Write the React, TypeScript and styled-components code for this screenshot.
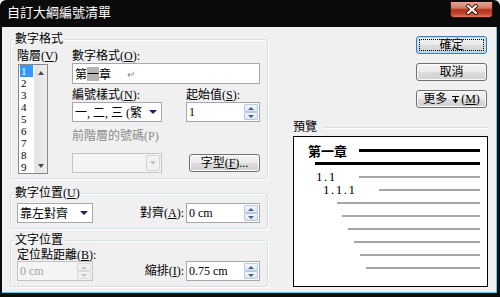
import React from 'react';
import styled, { createGlobalStyle } from 'styled-components';

const GlobalStyle = createGlobalStyle`
  html, body {
    margin: 0;
    padding: 0;
    background: #ffffff;
  }
  body {
    font-family: "Liberation Serif", "Noto Sans CJK TC", serif;
    font-size: 12px;
    color: #000;
  }
`;

const Window = styled.div`
  width: 500px;
  height: 297px;
  box-sizing: border-box;
  background: #0b0b0b;
  border-radius: 6px 6px 0 0;
  padding: 0 3px 4px 2px;
  display: flex;
  flex-direction: column;
  overflow: hidden;
`;

const TitleBar = styled.div`
  height: 27px;
  flex: none;
  display: flex;
  align-items: flex-start;
  padding-left: 5px;
`;

const Title = styled.div`
  margin-top: 4px;
  color: #ffffff;
  font-family: "Noto Sans CJK TC", sans-serif;
  font-size: 13px;
  line-height: 16px;
`;

const CloseButton = styled.div`
  margin: 2px 4px 0 auto;
  width: 43px;
  height: 16px;
  box-sizing: border-box;
  border: 1px solid #3d130a;
  border-top: none;
  border-radius: 0 0 4px 4px;
  background: linear-gradient(#e6a594 0%, #d27a64 40%, #b7321b 52%, #c2452b 78%, #e0805f 100%);
  display: flex;
  align-items: center;
  justify-content: center;
`;

const Client = styled.div`
  flex: 1;
  display: flex;
  gap: 25px;
  padding: 6px 8px 5px 8px;
  background: #f0f0f0;
  border-right: 1px solid #5cc7ee;
  border-bottom: 1px solid #5cc7ee;
  min-height: 0;
`;

const LeftColumn = styled.div`
  width: 258px;
  flex: none;
  display: flex;
  flex-direction: column;
`;

const RightColumn = styled.div`
  flex: 1;
  display: flex;
  flex-direction: column;
`;

const Group = styled.fieldset<{ $top?: number }>`
  margin: ${p => p.$top ?? 0}px 0 0 0;
  padding: 3px 7px ${p => (p.$top ? 5 : 4)}px 5px;
  border: 1px solid #d5dfe5;
  border-radius: 3px;
  min-width: 0;
  box-shadow: inset 1px 1px 0 #ffffff, 1px 1px 0 #ffffff;
`;

const Legend = styled.legend`
  padding: 0 1px;
  margin-left: -2px;
  font-size: 12px;
  line-height: 13px;
`;

const Label = styled.div<{ $disabled?: boolean; $h?: number; $w?: number }>`
  font-size: 12px;
  line-height: ${p => p.$h ?? 14}px;
  white-space: nowrap;
  ${p => (p.$w ? `width: ${p.$w}px;` : '')}
  color: ${p => (p.$disabled ? '#8c8c8c' : '#000')};
  u {
    text-underline-offset: 1px;
  }
`;

/* ---------- level list ---------- */

const FormatRow = styled.div`
  display: flex;
  gap: 24px;
  padding-left: 1px;
`;

const LevelColumn = styled.div`
  width: 31px;
  flex: none;
`;

const ListBox = styled.div`
  margin: 1px 0 0 1px;
  height: 110px;
  box-sizing: border-box;
  border: 1px solid #828790;
  background: #ffffff;
  display: flex;
  overflow: hidden;
`;

const ListItems = styled.div`
  width: 15px;
  flex: none;
`;

const ListItem = styled.div<{ $selected?: boolean }>`
  margin-left: 1px;
  width: 13px;
  height: 12px;
  padding-left: 1px;
  box-sizing: border-box;
  font-size: 11px;
  line-height: 12px;
  background: ${p => (p.$selected ? '#3399ff' : 'transparent')};
  color: ${p => (p.$selected ? '#ffffff' : '#000')};
`;

const ScrollTrack = styled.div`
  flex: 1;
  background: linear-gradient(90deg, #e3e3e3, #ededed);
  border-left: 1px solid #e8e8e8;
  display: flex;
  flex-direction: column;
  justify-content: space-between;
  align-items: center;
  padding: 6px 0 5px;
`;

const Arrow = styled.span<{ $dir: 'up' | 'down'; $color: string; $w: number }>`
  width: 0;
  height: 0;
  border-left: ${p => p.$w / 2}px solid transparent;
  border-right: ${p => p.$w / 2}px solid transparent;
  ${p =>
    p.$dir === 'up'
      ? `border-bottom: ${Math.ceil(p.$w / 2)}px solid ${p.$color};`
      : `border-top: ${Math.ceil(p.$w / 2)}px solid ${p.$color};`}
`;

/* ---------- inputs ---------- */

const FieldColumn = styled.div`
  width: 188px;
  flex: none;
  display: flex;
  flex-direction: column;
`;

const TextField = styled.div`
  height: 21px;
  box-sizing: border-box;
  border: 1px solid #a4a9b0;
  background: #ffffff;
  padding: 0 2px;
  display: flex;
  align-items: center;
  font-family: "Noto Sans CJK TC", sans-serif;
  font-size: 12px;
`;

const Shaded = styled.span`
  background: #b4b4b4;
  line-height: 14px;
`;

const ParaMark = styled.span`
  margin-left: 16px;
  color: #8a8a8a;
  font-size: 10px;
`;

const ControlRow = styled.div<{ $top?: number; $bottom?: boolean }>`
  margin-top: ${p => p.$top ?? 0}px;
  display: flex;
  justify-content: space-between;
  align-items: ${p => (p.$bottom ? 'flex-end' : 'center')};
`;

const Combo = styled.div<{ $w: number; $disabled?: boolean; $left?: number }>`
  width: ${p => p.$w}px;
  height: 20px;
  margin-left: ${p => p.$left ?? 0}px;
  box-sizing: border-box;
  border: 1px solid ${p => (p.$disabled ? '#c3c3c3' : '#a4a9b0')};
  background: ${p => (p.$disabled ? '#f4f4f4' : '#ffffff')};
  display: flex;
  align-items: center;
  padding-left: 2px;
`;

const ComboText = styled.span`
  flex: 1;
  overflow: hidden;
  white-space: nowrap;
  font-size: 12px;
`;

const ComboArrow = styled.span`
  width: 14px;
  display: flex;
  justify-content: center;
  margin-right: 1px;
`;

const DisabledDrop = styled.span`
  width: 14px;
  height: 16px;
  margin-right: 1px;
  box-sizing: border-box;
  border: 1px solid #d4d4d4;
  border-radius: 2px;
  background: #f2f2f2;
  display: flex;
  align-items: center;
  justify-content: center;
`;

const Spin = styled.div<{ $w: number; $disabled?: boolean }>`
  width: ${p => p.$w}px;
  height: 20px;
  box-sizing: border-box;
  border: 1px solid ${p => (p.$disabled ? '#c3c3c3' : '#a4a9b0')};
  background: ${p => (p.$disabled ? '#f4f4f4' : '#ffffff')};
  display: flex;
  align-items: center;
  color: ${p => (p.$disabled ? '#a3a3a3' : '#000')};
`;

const SpinValue = styled.span`
  flex: 1;
  padding-left: 2px;
  font-size: 12px;
  white-space: nowrap;
`;

const SpinButtons = styled.div`
  width: 14px;
  height: 16px;
  margin-right: 1px;
  display: flex;
  flex-direction: column;
`;

const SpinHalf = styled.div<{ $disabled?: boolean }>`
  flex: 1;
  box-sizing: border-box;
  border: 1px solid ${p => (p.$disabled ? '#d9d9d9' : '#b9c9dc')};
  border-radius: 1px;
  background: ${p =>
    p.$disabled ? '#f0f0f0' : 'linear-gradient(#f3f7fc, #dbe5f1)'};
  display: flex;
  align-items: center;
  justify-content: center;
`;

const LabeledField = styled.div`
  display: flex;
  align-items: center;
  gap: 2px;
`;

const StackedField = styled.div`
  margin-left: 1px;
`;

/* ---------- buttons ---------- */

const PushButton = styled.div<{ $w?: number; $default?: boolean }>`
  width: ${p => p.$w ?? 71}px;
  height: 18px;
  box-sizing: border-box;
  border: 1px solid ${p => (p.$default ? '#3c7fb1' : '#707070')};
  border-radius: 3px;
  background: linear-gradient(#f2f2f2 0%, #ebebeb 48%, #dddddd 52%, #cfcfcf 100%);
  box-shadow: ${p => (p.$default ? 'inset 0 0 0 1px #a6e0f7' : 'inset 0 0 0 1px #fbfbfb')};
  display: flex;
  align-items: center;
  justify-content: center;
  font-size: 12px;
  line-height: 14px;
  white-space: nowrap;
  outline: ${p => (p.$default ? '1px dotted #000' : 'none')};
  outline-offset: -4px;
  u {
    text-underline-offset: 1px;
  }
  svg {
    margin: 0 2px 0 5px;
  }
`;

const ButtonStack = styled.div`
  margin: 3px 1px 0 0;
  align-self: flex-end;
  display: flex;
  flex-direction: column;
  gap: 9px;
`;

/* ---------- preview ---------- */

const PreviewHeader = styled.div`
  margin-top: 13px;
  display: flex;
  align-items: center;
  gap: 6px;
  font-size: 12px;
  line-height: 13px;
`;

const HeaderRule = styled.div`
  flex: 1;
  height: 1px;
  background: #d5dfe5;
  box-shadow: 0 1px 0 #ffffff;
`;

const PreviewBox = styled.div`
  margin-top: 2px;
  flex: 1;
  border: 1px solid #000;
  background: #ffffff;
  padding: 7px 7px 0 0;
  display: flex;
  flex-direction: column;
`;

const PreviewRow = styled.div<{ $indent: number }>`
  height: 13px;
  display: flex;
  align-items: center;
  padding-left: ${p => p.$indent}px;
`;

const PreviewText = styled.span<{ $w: number; $strong?: boolean }>`
  width: ${p => p.$w}px;
  flex: none;
  white-space: nowrap;
  font-family: ${p =>
    p.$strong ? '"Noto Sans CJK TC", sans-serif' : '"Liberation Serif", serif'};
  font-weight: ${p => (p.$strong ? 700 : 400)};
  font-size: 13px;
  line-height: 13px;
  letter-spacing: ${p => (p.$strong ? 0 : 1.5)}px;
`;

const PreviewLine = styled.div<{ $strong?: boolean }>`
  flex: 1;
  height: ${p => (p.$strong ? 3 : 2)}px;
  background: ${p => (p.$strong ? '#000000' : '#a6a6a6')};
`;

const previewRows = [
  { text: '第一章', indent: 14, line: 65, strong: true },
  { text: '', indent: 21, line: 21, strong: true },
  { text: '1.1', indent: 22, line: 65 },
  { text: '1.1.1', indent: 29, line: 85 },
  { text: '', indent: 43, line: 43 },
  { text: '', indent: 48, line: 48 },
  { text: '', indent: 54, line: 54 },
  { text: '', indent: 60, line: 60 },
  { text: '', indent: 66, line: 66 },
  { text: '', indent: 72, line: 72 },
];

const levels = ['1', '2', '3', '4', '5', '6', '7', '8', '9'];

const SpinControl = ({ value, w, disabled }: { value: string; w: number; disabled?: boolean }) => (
  <Spin $w={w} $disabled={disabled}>
    <SpinValue>{value}</SpinValue>
    <SpinButtons>
      <SpinHalf $disabled={disabled}>
        <Arrow $dir="up" $w={6} $color={disabled ? '#c4c4c4' : '#4b5f85'} />
      </SpinHalf>
      <SpinHalf $disabled={disabled}>
        <Arrow $dir="down" $w={6} $color={disabled ? '#c4c4c4' : '#4b5f85'} />
      </SpinHalf>
    </SpinButtons>
  </Spin>
);

const MoreGlyph = () => (
  <svg width="7" height="9" viewBox="0 0 7 9">
    <path d="M0 1.5h7" stroke="#000" strokeWidth="1" />
    <path d="M3.5 2v6" stroke="#000" strokeWidth="1" />
    <path d="M0.5 4.5h6L3.5 8z" fill="#000" />
  </svg>
);

export default function App() {
  return (
    <>
      <GlobalStyle />
      <Window>
        <TitleBar>
          <Title>自訂大綱編號清單</Title>
          <CloseButton>
            <svg width="14" height="11" viewBox="0 0 14 11">
              <path d="M3 2l8 7M11 2l-8 7" stroke="#4a1c12" strokeWidth="4" strokeLinecap="round" />
              <path d="M3 2l8 7M11 2l-8 7" stroke="#ffffff" strokeWidth="2" strokeLinecap="round" />
            </svg>
          </CloseButton>
        </TitleBar>

        <Client>
          <LeftColumn>
            <Group>
              <Legend>數字格式</Legend>
              <FormatRow>
                <LevelColumn>
                  <Label>階層(<u>V</u>)</Label>
                  <ListBox>
                    <ListItems>
                      {levels.map(l => (
                        <ListItem key={l} $selected={l === '1'}>{l}</ListItem>
                      ))}
                    </ListItems>
                    <ScrollTrack>
                      <Arrow $dir="up" $w={7} $color="#4d4d4d" />
                      <Arrow $dir="down" $w={7} $color="#4d4d4d" />
                    </ScrollTrack>
                  </ListBox>
                </LevelColumn>

                <FieldColumn>
                  <Label>數字格式(<u>O</u>):</Label>
                  <TextField>
                    第<Shaded>一</Shaded>章<ParaMark>↵</ParaMark>
                  </TextField>
                  <ControlRow $top={4}>
                    <Label>編號樣式(<u>N</u>):</Label>
                    <Label $w={74}>起始值(<u>S</u>):</Label>
                  </ControlRow>
                  <ControlRow>
                    <Combo $w={90}>
                      <ComboText>一, 二, 三 (繁</ComboText>
                      <ComboArrow>
                        <Arrow $dir="down" $w={8} $color="#15246a" />
                      </ComboArrow>
                    </Combo>
                    <SpinControl value="1" w={74} />
                  </ControlRow>
                  <ControlRow $top={7}>
                    <Label $disabled>前階層的號碼(P)</Label>
                  </ControlRow>
                  <ControlRow $top={10}>
                    <Combo $w={90} $disabled>
                      <ComboText />
                      <DisabledDrop>
                        <Arrow $dir="down" $w={7} $color="#c3c3c3" />
                      </DisabledDrop>
                    </Combo>
                    <PushButton>
                      <span>字型(<u>F</u>)...</span>
                    </PushButton>
                  </ControlRow>
                </FieldColumn>
              </FormatRow>
            </Group>

            <Group $top={8}>
              <Legend>數字位置(<u>U</u>)</Legend>
              <ControlRow>
                <Combo $w={76} $left={1}>
                  <ComboText>靠左對齊</ComboText>
                  <ComboArrow>
                    <Arrow $dir="down" $w={8} $color="#15246a" />
                  </ComboArrow>
                </Combo>
                <LabeledField>
                  <Label>對齊(<u>A</u>):</Label>
                  <SpinControl value="0 cm" w={74} />
                </LabeledField>
              </ControlRow>
            </Group>

            <Group $top={5}>
              <Legend>文字位置</Legend>
              <ControlRow $bottom>
                <StackedField>
                  <Label $h={11}>定位點距離(<u>B</u>):</Label>
                  <SpinControl value="0 cm" w={76} disabled />
                </StackedField>
                <LabeledField>
                  <Label>縮排(<u>I</u>):</Label>
                  <SpinControl value="0.75 cm" w={74} />
                </LabeledField>
              </ControlRow>
            </Group>
          </LeftColumn>

          <RightColumn>
            <ButtonStack>
              <PushButton $default>確定</PushButton>
              <PushButton>取消</PushButton>
              <PushButton>
                <span>更多</span>
                <MoreGlyph />
                <span>(<u>M</u>)</span>
              </PushButton>
            </ButtonStack>
            <PreviewHeader>
              預覽
              <HeaderRule />
            </PreviewHeader>
            <PreviewBox>
              {previewRows.map((r, i) => (
                <PreviewRow key={i} $indent={r.indent}>
                  <PreviewText $w={r.line - r.indent} $strong={r.strong && !!r.text}>
                    {r.text}
                  </PreviewText>
                  <PreviewLine $strong={r.strong} />
                </PreviewRow>
              ))}
            </PreviewBox>
          </RightColumn>
        </Client>
      </Window>
    </>
  );
}
